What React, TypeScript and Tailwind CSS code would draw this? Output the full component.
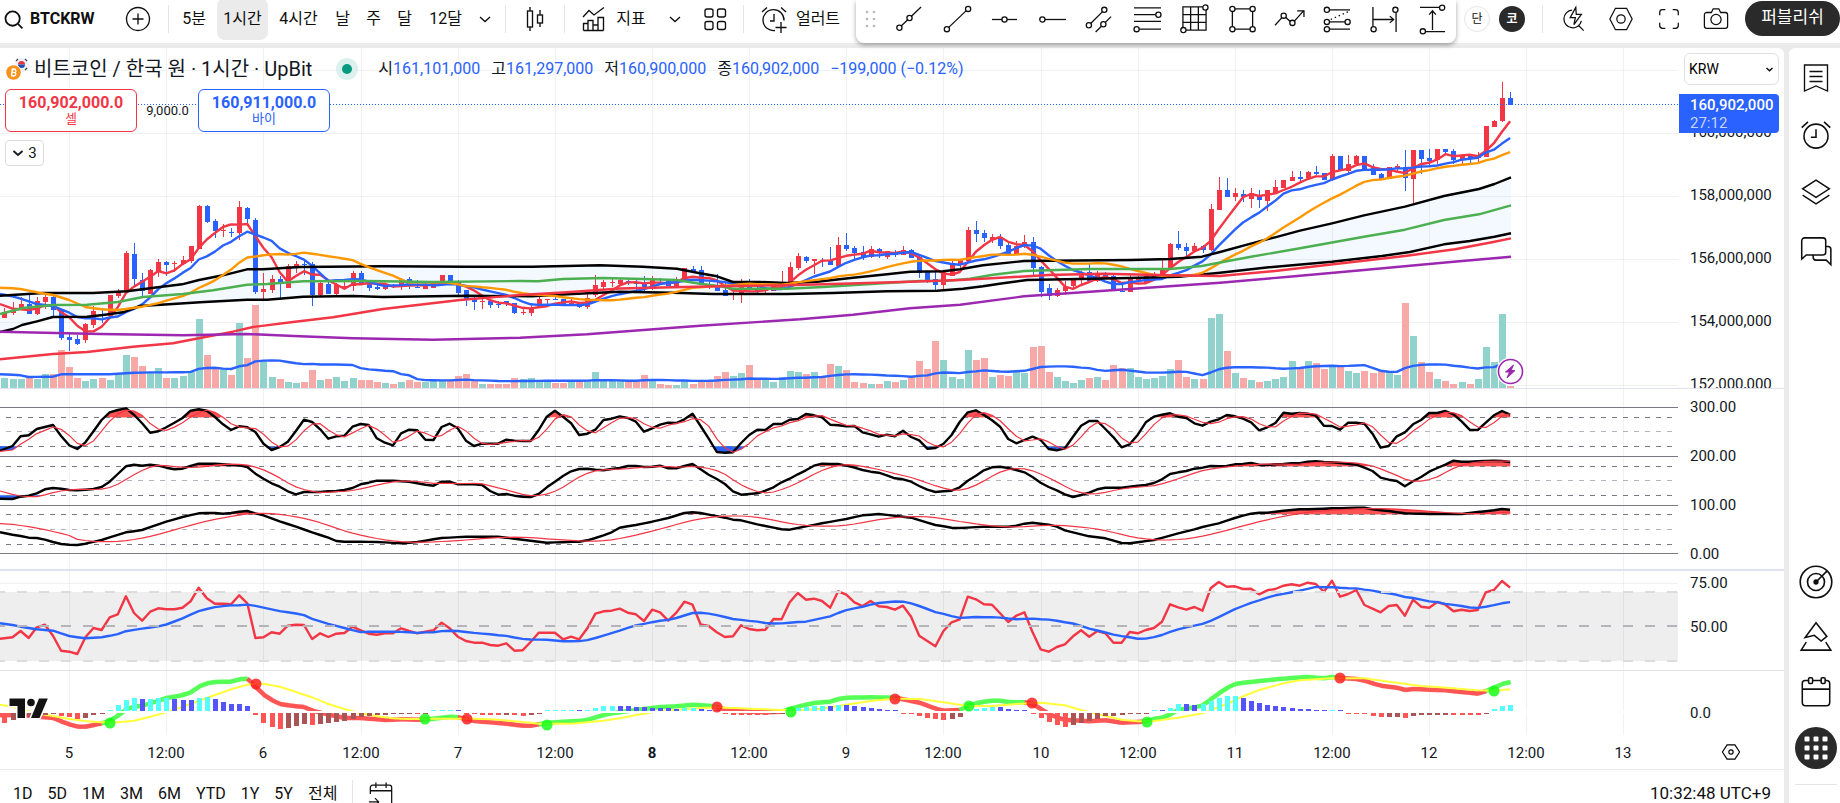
import React from "react";

/* ------------------------------------------------------------------ */
/* Series data. Vertical values are in thirds of a pixel from pane top */
/* ------------------------------------------------------------------ */

const BARS = 187;
const barX = (i: number) => 4.45 + 8.095 * i;
const snapX = (i: number) => Math.round(barX(i));

// direction (R = up, B = down), body top, body bottom, wick top, wick bottom, volume top
const CANDLES = `R396,413,383,413,594 R391,398,365,404,597 R372,389,352,389,597 B373,402,341,402,591 R363,402,350,405,597 R351,366,338,388,582 B351,390,345,414,582 B387,474,387,480,510
B471,480,456,513,561 B477,492,464,495,594 R432,480,429,489,603 R393,435,378,445,597 B402,405,385,428,594 R345,408,345,410,600 R333,348,328,354,585 R219,337,213,337,525
B222,297,189,322,531 B300,333,279,348,558 R270,342,267,342,580 R246,276,237,291,564 B246,255,243,288,594 R250,253,243,276,594 R240,252,228,255,588 R198,243,198,249,576
R78,207,75,207,417 B78,126,75,129,525 B123,153,117,174,564 R150,153,132,171,567 B156,159,144,171,585 R81,159,63,180,429 B84,117,81,138,534 B120,336,114,342,375
R327,336,279,360,543 R297,330,285,339,591 B297,306,288,360,597 R258,324,252,324,606 R252,264,243,279,609 B252,255,240,285,606 B252,346,246,378,570 R309,346,303,351,600
B312,342,303,342,597 R315,342,309,346,591 R318,321,306,327,603 R279,318,273,333,594 B279,309,273,309,600 B306,324,306,333,600 B321,327,312,330,606 R318,327,318,330,609
B318,321,312,324,612 R300,321,294,330,606 B297,318,291,327,600 B321,324,300,324,606 R315,327,303,327,606 R309,324,309,324,600 R285,315,285,318,603 B285,306,285,306,603
B303,339,300,345,588 B330,360,330,378,582 B354,366,348,390,603 R363,366,348,387,612 B363,375,360,384,612 B372,375,363,384,612 B363,372,363,378,612 B369,399,369,402,594
R396,399,384,405,597 R384,399,372,408,594 R357,384,351,384,600 R357,360,357,375,603 B357,360,351,360,609 B357,378,357,378,609 R369,378,354,378,603 B369,381,369,384,603
R354,381,336,387,600 R315,345,285,351,576 R306,321,300,327,600 R306,309,294,321,600 R300,312,297,312,600 B303,309,294,315,603 B306,312,300,333,603 B309,324,288,333,585
R294,324,288,330,600 B297,300,294,306,612 B300,318,297,318,615 R297,321,291,321,615 R264,306,264,306,603 B267,273,258,276,612 B270,315,258,315,600 B312,321,300,327,600
B318,333,282,333,588 B330,348,303,348,576 R342,345,330,360,588 R318,345,297,369,579 B318,330,297,336,555 B330,333,303,342,594 R330,333,321,342,597 R306,333,306,333,606
R309,321,273,324,591 R261,321,246,321,573 R228,264,219,270,576 B231,243,228,249,582 R237,243,237,282,576 B240,243,234,261,591 B240,255,201,255,552 R195,258,171,261,558
B195,207,159,213,570 B204,219,198,237,606 B216,231,198,240,609 R207,231,198,234,612 B207,219,204,234,612 R213,231,213,237,603 B219,225,210,231,606 R210,225,198,225,600
B210,234,207,234,591 B231,279,228,294,543 B276,300,276,309,567 B297,315,273,330,483 R273,315,270,330,540 R252,288,243,288,591 R240,255,237,270,597 R150,243,141,243,510
B150,162,123,186,540 B159,174,150,186,534 R171,180,162,189,591 B171,198,162,207,585 B195,222,186,222,588 R198,222,183,222,576 R186,202,165,204,579 B186,264,171,288,501
B261,336,258,351,498 B324,348,312,360,576 R330,348,324,351,591 R321,333,303,345,603 R297,318,294,324,609 R279,300,273,312,600 B276,303,249,303,594 R279,303,273,306,591
B279,294,276,297,600 B288,333,285,333,555 B333,336,312,336,564 R294,336,282,336,564 R297,300,288,309,591 R288,309,282,312,597 R282,294,276,300,594 R264,291,237,291,588
R192,267,189,270,567 B192,204,153,210,540 B201,213,189,228,591 R198,213,189,216,597 B198,210,195,219,597 R87,210,72,213,414 R30,90,-9,90,402 B30,51,-6,51,513
R39,51,24,63,579 B42,51,30,66,594 R39,57,24,84,600 B45,60,30,84,606 R30,63,30,93,603 R21,39,0,42,597 R0,24,0,24,591 R-9,3,-27,3,543
B-9,-3,-27,6,564 R-24,-6,-27,-3,543 B-24,-18,-42,-15,549 B-21,0,-21,0,567 R-72,0,-78,3,558 B-72,-30,-72,-30,561 R-48,-27,-75,-21,573 R-72,-48,-75,-42,579
B-72,-27,-72,-27,573 B-36,-15,-48,-15,579 B-18,-3,-21,0,570 R-39,-3,-39,-3,576 R-42,-36,-48,-24,585 B-39,-6,-90,33,369 R-90,-3,-90,69,468 B-90,-63,-90,-18,546
B-66,-57,-93,-42,576 R-93,-60,-93,-48,597 B-93,-84,-93,-78,603 B-87,-60,-93,-48,612 R-75,-60,-78,-48,606 B-72,-66,-75,-48,612 R-72,-66,-84,-48,597 R-162,-69,-162,-69,501
R-177,-159,-180,-159,546 R-246,-177,-294,-174,402 B-246,-225,-264,-225,618`
  .split(/\s+/)
  .map((t) => {
    const [top, bottom, high, low, vol] = t.slice(1).split(",").map(Number);
    const up = t[0] === "R";
    return { up, top, bottom, high, low, vol, close: up ? top : bottom };
  });

// Expands "index,value" pairs to one value per bar.
const expand = (text: string) => {
  const pts = text.trim().split(/\s+/).map((p) => p.split(",").map(Number));
  const out: number[] = [];
  for (let i = 0; i < BARS; i++) {
    let k = pts.findIndex((p) => p[0] >= i);
    if (k < 0) k = pts.length - 1;
    const b = pts[k];
    const a = pts[Math.max(0, k - 1)];
    out.push(b[0] === a[0] ? b[1] : a[1] + ((b[1] - a[1]) * (i - a[0])) / (b[0] - a[0]));
  }
  return out;
};

const list = (text: string) => text.trim().split(/[\s,]+/).map(Number);

// Simple moving average, with the values before the first full window given.
const average = (values: number[], n: number, lead: string) => {
  const head = expand(lead);
  return values.map((_, i) =>
    i < n - 1 ? head[i] : values.slice(i - n + 1, i + 1).reduce((a, b) => a + b, 0) / n
  );
};

const trace = (values: number[], base: number) =>
  values.map((v, i) => `${i === 0 ? 0 : barX(i).toFixed(1)},${(base + v / 3).toFixed(1)}`).join(" ");

const closes = CANDLES.map((c) => c.close);
const MA5 = average(closes, 5, "0,372 1,386 3,390 4,388");
const MA10 = average(closes, 10, "0,342 2,356 4,372 6,378 8,398 9,407");
const MA20 = average(closes, 20, "0,323 2,327 4,337 6,345 8,360 10,381 12,388 14,390 15,387 17,380 19,369");
const VOL20 = average(CANDLES.map((c) => c.vol), 20, "0,583 2,586 3,591 6,590 7,583 13,583 16,578 19,577");

const UPPER =
  "0,295.7 43,293 93,293 127,291.3 150,288.3 182,284.3 199,280 223,275.3 247,269.3 263,269.3 300,267 383,266.3 467,266.7 532,266.7 600,265.3 643,266.7 677,268.7 700,273.3 717,276.3 733,282 760,282 787,283 817,281.7 853,277.7 887,274.3 910,271.7 943,271.3 960,269.3 983,265.3 1024,261 1131,260 1170,259 1202,256.7 1220,252 1248,244.3 1275,237.3 1300,230.7 1332,223.3 1364,215.3 1405,206.7 1444,196 1479,189 1494.5,184 1511,177.3";
const LOWER =
  "0,332 13,329 22,325 37,321.3 53,317 87,316.7 103,315 123,312.3 140,306 173,304 200,302.3 247,299.7 267,299.7 303,296.7 353,296 383,297 467,295.7 532,296.3 567,294.3 620,291.7 673,292.7 713,294 787,294 833,293 887,291.3 937,290.7 963,288.7 983,286.3 1003,283.3 1027,280 1131,278 1179,276.7 1220,272.7 1269,267.3 1332,261.7 1382,256 1410,252 1444,244.3 1470,241 1494.5,236.7 1511,233.3";
const MIDDLE =
  "0,314 23,308 53,305 87,304.7 118,302 143,297 183,294 213,290.3 247,284.7 267,284 303,281.3 367,281 433,282 520,281 538,281.3 563,279 603,278 643,279 677,280 700,283.7 720,286.3 733,288.7 787,288.7 823,287 887,283 920,281 947,280.7 970,278.7 993,274.7 1024,271 1090,269 1170,269 1202,266 1224,261.7 1251,256.7 1300,248.3 1364,236.7 1405,229.7 1444,220 1479,214.3 1511,205.3";
const SLOW =
  "0,359.3 53,354 87,352 133,346.7 173,343.3 200,338 233,331.7 253,327 293,322 333,317.3 383,309 460,300 520,295 567,292.3 620,288.5 673,287.3 733,286 787,285.3 833,284 910,281.7 960,280 1020,276.7 1048,275 1103,273.7 1170,275.3 1220,276 1275,271 1344,263 1405,256 1455,249.3 1492,242.3 1511,238.3";
const SLOWEST =
  "0,331.7 100,334 183,335.3 247,334 300,336.3 353,338.3 433,339.7 520,337.7 587,334.3 700,325.7 800,319.3 853,314.7 910,308.3 960,304.7 1024,296.3 1090,291.7 1220,282.7 1289,276.7 1364,270 1448,262.3 1511,256.7";

const K1 = list(`182,168,139,136,117,111,105,138,166,177,157,124,90,67,60,55,74,100,128,124,112,98,84,62,58,62,81,103,120,109,112,126,161,180,171,155,123,89,96,118,146,139,137,110,102,105,145,158,166,130,119,121,149,150,111,101,115,152,168,161,161,161,149,152,153,153,120,80,62,80,100,135,131,119,90,86,79,
84,95,125,115,104,98,99,88,71,108,146,186,188,187,159,135,119,120,102,102,89,87,72,76,82,104,106,109,108,127,133,140,134,139,122,141,151,176,174,161,135,96,67,61,75,91,110,147,160,150,140,150,177,181,175,140,107,93,93,117,142,172,163,134,97,80,74,70,80,84,100,107,95,88,
75,79,86,97,121,112,99,68,71,69,71,77,107,108,119,98,98,101,131,173,168,139,127,103,90,69,69,63,73,94,119,120,98,76,63,74`);
const D1 = average(K1, 3, "0,184 1,180 2,165");

const K2 = list(`326,327,320,317,310,298,294,296,300,301,299,297,291,275,252,229,224,227,224,227,233,238,236,228,221,221,221,223,225,226,231,251,266,280,290,304,313,306,306,306,304,303,300,294,283,278,272,272,272,274,275,280,284,287,275,275,283,283,283,285,303,314,312,317,320,321,312,292,275,258,244,237,236,239,241,237,234,
228,228,231,230,227,235,235,228,222,238,254,267,282,304,314,312,310,302,292,277,266,253,241,227,221,222,222,227,233,240,245,248,256,265,268,275,288,299,306,304,302,292,272,257,241,232,230,234,240,247,261,278,291,301,313,321,315,308,298,293,293,293,290,287,285,279,268,252,247,243,236,233,228,229,
228,223,222,219,224,225,223,222,220,220,215,214,216,217,219,221,224,233,243,263,269,273,289,274,261,245,234,224,212,215,215,214,213,212,213,216`);
const D2 = average(K2, 5, "0,303 1,313 2,318 3,320");

const K3 = expand(`0,427 1,434 2,438 3,443 4,444 5,449 6,456 7,462 8,464 9,465 10,461 12,450 15,427 17,420 20,395 22,381 24,370 25,369 26,369 27,371 28,369 29,365 30,363 31,370 32,376 34,394 36,410 38,427 40,443 41,453 42,455 46,456 49,460 51,456 54,444 57,440 61,440 64,449 67,458 71,455 72,451 73,444 74,436 75,427 76,413 78,405 80,395 82,384 84,369 85,367 86,369 89,383 90,389 91,391 93,403 96,418 97,419 98,414 101,400 104,387 106,376 108,372 112,383 115,405 117,413 118,414 121,410 124,410 125,407 126,401 127,398 129,404 130,410 131,421 134,439 136,445 138,459 139,460 142,450 145,430 147,418 148,411 150,400 151,392 152,384 153,377 154,371 155,368 156,368 158,362 160,358 162,357 164,355 168,353 169,358 171,363 173,370 176,372 180,372 182,366 184,361 185,357 186,359`);
const D3 = average(K3, 10, "0,401 1,403 3,410 5,419 7,430 9,443");

const RSI = list(`236,232,213,234,202,194,227,272,275,282,232,204,210,172,163,109,159,182,155,145,148,148,143,124,83,115,131,131,133,106,130,234,232,217,221,197,194,195,237,220,231,221,219,200,211,221,224,220,220,205,213,220,215,211,188,205,230,243,248,248,255,257,250,272,271,246,218,218,218,238,230,238,205,161,154,152,146,
158,163,183,149,157,182,158,125,134,193,198,217,231,229,196,207,211,209,177,178,127,99,119,116,123,143,94,104,127,138,123,139,141,149,137,170,227,243,259,213,187,178,110,118,133,134,160,186,167,157,216,268,275,261,253,229,211,230,213,220,248,248,216,220,210,204,185,133,142,149,141,152,85,66,
80,79,87,86,103,91,87,77,73,77,68,72,95,62,110,102,90,135,146,157,138,135,167,119,140,143,126,134,154,149,153,150,97,90,63,83`);
const RSI_MA = average(RSI, 14, "0,190 2,200 4,208 6,212 8,228 10,235 12,232");

const MACD = expand(`0,466 2,464 4,470 5,472 6,474 7,484 8,493 9,500 10,500 11,495 12,490 13,482 14,467 15,448 16,440 17,437 18,430 19,422 20,414 21,410 22,405 23,397 24,380 25,370 26,366 28,365 29,358 30,356 31,380 32,404 33,420 34,432 35,436 37,441 38,452 40,464 42,474 44,474 47,480 49,478 51,479 53,476 55,470 56,472 57,477 58,483 60,487 62,491 64,497 65,497 67,489 69,485 71,483 72,480 73,472 74,465 75,460 76,457 77,453 79,447 81,441 83,439 85,434 87,437 88,441 89,448 90,453 94,457 96,455 97,447 98,440 99,434 100,429 102,425 103,417 104,413 107,412 110,413 111,418 113,428 114,437 115,446 116,452 118,450 119,437 120,430 121,425 122,422 123,422 124,426 126,427 127,432 128,447 129,462 130,472 131,480 133,482 134,484 136,481 138,488 140,486 141,484 142,476 143,473 144,463 145,449 147,442 148,436 149,418 150,400 151,384 152,372 153,368 156,361 157,358 159,354 161,351 163,355 164,351 165,354 167,357 168,362 169,370 170,377 172,383 173,390 174,387 178,391 182,401 183,393 184,383 185,372 186,366`);
const SIGNAL = expand(`0,434 1,440 4,460 6,468 8,477 10,483 12,487 14,487 16,482 18,470 20,457 22,440 24,423 26,405 28,388 30,374 31,371 32,371 34,380 36,396 38,412 40,432 42,447 44,460 46,469 48,475 50,477 54,476 58,476 61,479 64,486 66,491 70,491 74,482 76,475 78,465 80,457 82,451 86,444 88,442 92,446 96,450 98,451 101,446 104,434 107,423 110,416 113,417 116,427 119,438 122,438 125,432 128,428 131,436 133,450 136,468 138,479 140,484 142,483 145,473 148,460 150,441 151,432 153,409 155,390 158,370 160,361 164,355 168,355 171,365 175,378 178,383 182,391 184,392 186,388`);

const CROSSES: [number, number, boolean][] = [
  [110, 723, true], [256, 684, false], [425, 719, true], [467, 719, false], [547, 725, true],
  [717, 707, false], [791, 712, true], [895, 699, false], [969, 706, true], [1032, 703, false],
  [1147, 722, true], [1340, 678, false], [1494, 691, true],
];

const TIMES = ["5", "12:00", "6", "12:00", "7", "12:00", "8", "12:00", "9", "12:00", "10", "12:00", "11", "12:00", "12", "12:00", "13"];
const timeX = (k: number) => snapX(8 + 12 * k);

/* ------------------------------------------------------------------ */
/* Chart panes                                                         */
/* ------------------------------------------------------------------ */

const INK = "#131722";
const UP = "#f23645";
const DOWN = "#2962ff";
const GRID = "#f0f1f2";

function Line({ points, color, width = 2.4 }: { points: string; color: string; width?: number }) {
  return <polyline points={points} fill="none" stroke={color} strokeWidth={width} strokeLinejoin="round" />;
}

function VerticalGrid({ top, height }: { top: number; height: number }) {
  return (
    <>
      {TIMES.map((_, k) => (
        <rect key={k} x={timeX(k)} y={top} width="1" height={height} fill="#000" opacity="0.055" />
      ))}
    </>
  );
}

function Pane({
  top, height, line, labels, children, overlay, axis,
}: {
  top: number; height: string; line: string; labels: [string, number][];
  children: React.ReactNode; overlay?: React.ReactNode; axis?: React.ReactNode;
}) {
  return (
    <section className={`relative flex shrink-0 ${height} ${line}`}>
      <svg className="h-full min-w-0 flex-1 overflow-hidden" aria-hidden="true">
        <g transform={`translate(0,${-top})`}>{children}</g>
      </svg>
      <div className="relative h-full w-[106px] shrink-0">
        <svg className="h-full w-full overflow-hidden text-[15px]">
          <g transform={`translate(0,${-top})`} fill={INK}>
            {labels.map(([text, y]) => (
              <text key={text} x="12" y={y + 5}>{text}</text>
            ))}
          </g>
        </svg>
        {axis}
      </div>
      {overlay}
    </section>
  );
}

function PricePane() {
  const band = `${UPPER} ${LOWER.split(" ").reverse().join(" ")}`;
  return (
    <Pane
      top={48}
      height="h-[341px]"
      line="border-b border-[#e0e3eb]"
      labels={[["160,000,000", 132], ["158,000,000", 195], ["156,000,000", 258], ["154,000,000", 321], ["152,000,000", 384]]}
      overlay={<Legend />}
      axis={<PriceAxis />}
    >
      {[70, 133, 196, 259, 322, 385].map((y) => (
        <rect key={y} x="0" y={y} width="100%" height="1" fill={GRID} />
      ))}
      <VerticalGrid top={48} height={340} />
      {CANDLES.map((c, i) => (
        <rect key={i} x={snapX(i) - 3} y={180 + Math.round(c.vol / 3)} width="7" height={208 - Math.round(c.vol / 3)} fill={c.up ? "#92d2cc" : "#f7a9a7"} />
      ))}
      <Line points={trace(VOL20, 180)} color={DOWN} />
      <polygon points={band} fill="#2196f3" opacity="0.055" />
      {CANDLES.map((c, i) => {
        const x = snapX(i);
        const y = 180 + Math.round(c.top / 3);
        const h = Math.max(1, Math.round(c.bottom / 3) - Math.round(c.top / 3));
        const w = 180 + Math.round(c.high / 3);
        return (
          <g key={i} fill={c.up ? UP : DOWN}>
            <rect x={x} y={w} width="1" height={Math.round(c.low / 3) - Math.round(c.high / 3)} />
            <rect x={x - 2} y={y} width="5" height={h} />
          </g>
        );
      })}
      <Line points={trace(MA5, 180)} color={UP} />
      <Line points={trace(MA10, 180)} color={DOWN} />
      <Line points={UPPER} color="#000" />
      <Line points={LOWER} color="#000" />
      <Line points={trace(MA20, 180)} color="#ff9800" />
      <Line points={MIDDLE} color="#4caf50" />
      <Line points={SLOW} color={UP} />
      <Line points={SLOWEST} color="#9c27b0" />
      <line x1="0" x2="100%" y1="104.5" y2="104.5" stroke={DOWN} strokeDasharray="1 2" />
      <circle cx="1510.5" cy="371.5" r="14" fill="#fff" />
      <circle cx="1510.5" cy="371.5" r="12" fill="#fff" stroke="#9c27b0" strokeWidth="1.6" />
      <path d="M1513.5 365 l-8 7 h4 l-2.500 6 8-7.500 h-4z" fill="#9c27b0" stroke="#9c27b0" strokeLinejoin="round" />
    </Pane>
  );
}

function OscillatorPane() {
  const zones = [
    { k: K1, d: D1, top: 52, hi: 82, mid: 124, lo: 169, end: 199 },
    { k: K2, d: D2, top: 199, hi: 229, mid: 271, lo: 316, end: 346 },
    { k: K3, d: D3, top: 346, hi: 373, mid: 418, lo: 463, end: 490 },
  ];
  const y = (v: number) => 390 + Math.floor(v / 3);
  return (
    <Pane top={389} height="h-[182px]" line="border-b-2 border-[#e0e3eb]" labels={[["300.00", 407], ["200.00", 456], ["100.00", 505], ["0.00", 554]]}>
      <VerticalGrid top={389} height={180} />
      {[52, 199, 346, 490].map((v) => (
        <rect key={v} x="0" y={y(v)} width="100%" height="1" fill="#787b86" />
      ))}
      {zones.map((z, n) => {
        const hi = 390 + z.hi / 3;
        const lo = 390 + z.lo / 3;
        return (
          <g key={n}>
            <clipPath id={`over${n}`}><rect x="0" y={y(z.top)} width="1511" height={hi - y(z.top)} /></clipPath>
            <clipPath id={`under${n}`}><rect x="0" y={lo} width="1511" height={y(z.end) - lo} /></clipPath>
            {[z.k, z.d].map((s, m) => (
              <g key={m}>
                <polygon clipPath={`url(#over${n})`} points={`0,${lo} ${trace(s, 390)} 1511,${lo}`} fill="#ff5252" />
                <polygon clipPath={`url(#under${n})`} points={`0,${hi} ${trace(s, 390)} 1511,${hi}`} fill={DOWN} />
              </g>
            ))}
            {[z.hi, z.mid, z.lo].map((v) => (
              <line key={v} x1="0" x2="100%" y1={y(v) + 0.5} y2={y(v) + 0.5} stroke={v === z.mid ? "#b2b5be" : "#787b86"} strokeDasharray="5 6" strokeDashoffset="5" />
            ))}
            <Line points={trace(z.k, 390)} color="#000" />
            <Line points={trace(z.d, 390)} color={UP} width={1.2} />
          </g>
        );
      })}
    </Pane>
  );
}

function RsiPane() {
  return (
    <Pane top={571} height="h-[100px]" line="border-b border-[#e0e3eb]" labels={[["75.00", 583], ["50.00", 627]]}>
      <rect x="0" y="583" width="100%" height="1" fill={GRID} />
      <rect x="0" y="592" width="100%" height="69" fill="#eeeeee" />
      <VerticalGrid top={571} height={99} />
      <Line points={trace(RSI, 560)} color={UP} />
      <Line points={trace(RSI_MA, 560)} color={DOWN} />
      {[[592, "#dcdcdc"], [626, "#b4b4ba"], [661, "#dcdcdc"]].map(([y, c]) => (
        <line key={y} x1="0" x2="100%" y1={y} y2={y} stroke={c as string} strokeWidth="2" strokeDasharray="10 12" strokeDashoffset="5" />
      ))}
    </Pane>
  );
}

function MacdPane() {
  const hist = MACD.map((v, i) => SIGNAL[i] - v);
  return (
    <Pane top={671} height="h-16" line="" labels={[["0.0", 713]]}>
      <VerticalGrid top={671} height={64} />
      {MACD.slice(1).map((v, k) => (
        <line
          key={k}
          x1={k === 0 ? 0 : barX(k)}
          y1={560 + MACD[k] / 3}
          x2={barX(k + 1) + 0.5}
          y2={560 + v / 3}
          stroke={hist[k + 1] >= 0 ? "#55ff55" : "#ff5555"}
          strokeWidth="4.500"
        />
      ))}
      <Line points={trace(SIGNAL, 560)} color="#ffff3c" width={2} />
      {hist.map((h, i) => {
        const rising = i > 0 && h > hist[i - 1];
        const size = Math.max(1, Math.round(Math.abs(h) / 3) - 1);
        const color = h >= 0 ? (rising ? "#55ffff" : "#5555ff") : rising ? "#aa5555" : "#ff5555";
        return <rect key={i} x={snapX(i) - 2} y={h >= 0 ? 711 - size : 713} width="5" height={size} fill={color} />;
      })}
      <rect x="0" y="711" width="1640" height="2" fill="#fff" />
      {CROSSES.map(([x, y, up]) => (
        <circle key={x} cx={x} cy={y} r="5.5" fill={up ? "#19ff19" : "#ff2222"} opacity="0.85" />
      ))}
      <g fill="#131313" stroke="#fff" strokeWidth="3" paintOrder="stroke">
        <path d="M9.500 698.500H25V718H17.500V706H9.500z" />
        <circle cx="31" cy="702.500" r="3.800" />
        <path d="M39 698.500H47.800L39.500 718H31z" />
      </g>
    </Pane>
  );
}

function TimeAxis() {
  return (
    <div className="flex h-[35px] shrink-0 items-center border-b border-[#ebebeb]">
      <svg className="h-full min-w-0 flex-1 overflow-hidden text-[15px]">
        {TIMES.map((t, k) => (
          <text key={k} x={timeX(k)} y="23" textAnchor="middle" fill={INK} className={k === 6 ? "font-bold" : ""}>{t}</text>
        ))}
      </svg>
      <div className="flex w-[106px] shrink-0 justify-center">
        <button aria-label="축 설정"><Icon name="hexSmall" size={20} /></button>
      </div>
    </div>
  );
}

/* ------------------------------------------------------------------ */
/* Chart overlays                                                      */
/* ------------------------------------------------------------------ */

function Quote({ label, value }: { label: string; value: string }) {
  return (
    <span className="whitespace-nowrap">
      {label}
      <span className="text-[#2962ff]">{value}</span>
    </span>
  );
}

function Legend() {
  return (
    <div className="absolute top-[9px] left-[5px] flex flex-col items-start text-[#131722]">
      <div className="flex h-6 items-center">
        <svg width="24" height="24" viewBox="0 0 24 24" aria-hidden="true">
          <circle cx="16.500" cy="8" r="7.500" fill="#f0f1f5" />
          <path d="M13 7.500a3.500 3.500 0 0 1 7 0z" fill="#e8323f" />
          <path d="M13 7.500a3.500 3.500 0 0 0 7 0z" fill="#1d4fb4" />
          <path d="M11 4l2-2M20 2l2 2M20 13l2-2" stroke="#444" strokeWidth="1.200" />
          <circle cx="8.500" cy="15.500" r="8" fill="#fff" />
          <circle cx="8.500" cy="15.500" r="7.300" fill="#f7931a" />
          <g transform="rotate(12 8.5 15.5)">
            <path d="M6.500 12.500h2.700a1.400 1.400 0 0 1 0 2.900H7zM7 15.400h2.600a1.550 1.550 0 0 1 0 3.100H6.500M7 12.500v6M7.600 11.200v1.300M9.300 11.200v1.300M7.600 18.500v1.300M9.300 18.500v1.300" fill="none" stroke="#fff" strokeWidth="1.300" />
          </g>
        </svg>
        <h1 className="ml-[5px] text-[20px] whitespace-nowrap">비트코인 / 한국 원 · 1시간 · UpBit</h1>
        <span className="ml-6 flex size-[22px] items-center justify-center rounded-full bg-[#dcf1ed]">
          <span className="size-[10px] rounded-full bg-[#089981]" />
        </span>
        <div className="ml-5 flex gap-[11px] text-[16px]">
          <Quote label="시" value="161,101,000" />
          <Quote label="고" value="161,297,000" />
          <Quote label="저" value="160,900,000" />
          <Quote label="종" value="160,902,000" />
          <span className="whitespace-nowrap text-[#2962ff]">−199,000 (−0.12%)</span>
        </div>
      </div>
      <div className="mt-2 flex items-center">
        <button className="flex h-[43px] w-[132px] flex-col items-center justify-center rounded-md border border-[#f23645] bg-white text-[#f23645]">
          <span className="text-[16px] leading-[17px] font-bold">160,902,000.0</span>
          <span className="text-[13px] leading-4">셀</span>
        </button>
        <span className="w-[61px] text-center text-[13px]">9,000.0</span>
        <button className="flex h-[43px] w-[132px] flex-col items-center justify-center rounded-md border border-[#2962ff] bg-white text-[#2962ff]">
          <span className="text-[16px] leading-[17px] font-bold">160,911,000.0</span>
          <span className="text-[13px] leading-4">바이</span>
        </button>
      </div>
      <button className="mt-2 flex h-[26px] w-[39px] items-center justify-center gap-1 rounded border border-[#dcdcdc] bg-white text-[15px]">
        <svg width="12" height="12" viewBox="0 0 12 12" fill="none" stroke="currentColor" strokeWidth="1.800"><path d="M1.500 4l4.500 4 4.500-4" /></svg>
        3
      </button>
    </div>
  );
}

function PriceAxis() {
  return (
    <div className="absolute top-[5px] left-px flex w-full flex-col items-start">
      <div className="relative ml-[5px]">
        <select aria-label="통화" className="h-8 w-[95px] appearance-none rounded-md border border-[#e0e0e0] bg-white pl-1 text-[14px] text-black">
          <option>KRW</option>
        </select>
        <svg className="pointer-events-none absolute top-[12px] right-[5px]" width="9" height="9" viewBox="0 0 9 9" fill="none" stroke="#111" strokeWidth="1.500"><path d="M1.500 3l3 2.800 3-2.800" /></svg>
      </div>
      <div className="mt-[9px] flex h-[39px] w-[100px] flex-col justify-center rounded-r-sm bg-[#2962ff] pl-[11px] text-[15px] leading-[18px] text-white">
        <span className="font-medium">160,902,000</span>
        <span className="text-[#c5d4ff]">27:12</span>
      </div>
    </div>
  );
}

/* ------------------------------------------------------------------ */
/* Icons                                                               */
/* ------------------------------------------------------------------ */

const dot = (cx: number, cy: number, r = 2.7) => <circle key={`${cx}-${cy}`} cx={cx} cy={cy} r={r} fill="#fff" />;

const ICONS: Record<string, React.ReactNode> = {
  search: <g strokeWidth="2"><circle cx="13" cy="13" r="8" /><path d="M19 19l5 5" /></g>,
  plus: <><circle cx="14" cy="14" r="11.500" /><path d="M14 8.500v11M8.500 14h11" /></>,
  chevron: <path d="M9 12l5 4.500 5-4.500" />,
  candles: <><path d="M9 2v4M9 22v4M19 5v5M19 18v4" /><rect x="6.500" y="6" width="5" height="16" /><rect x="16.500" y="10" width="5" height="8" /></>,
  indicators: <path d="M3 12l6-6.500 5 4.500 10-7.500M3.500 25.500v-7h4.500v7M8 25.500v-10h5v10M13 20h5M13 25.500h5M18 25.500v-13h5.500v13M3.500 25.500h20" />,
  layout: <><rect x="4" y="4" width="8" height="8" rx="2" /><rect x="16.500" y="4" width="8" height="8" rx="2" /><rect x="4" y="16.500" width="8" height="8" rx="2" /><rect x="16.500" y="16.500" width="8" height="8" rx="2" /></>,
  alertPlus: <><path d="M24 15.500a10.500 10.500 0 1 0-9 10M14 9v7h-4M21 17v11M15.500 22.500h11M2 7l5-4.500M26 7l-5-4.500" /></>,
  alarm: <><circle cx="14" cy="15" r="10.500" /><path d="M14 9v7h-4.500M1.500 7.500l5.500-5M26.500 7.500l-5.500-5" /></>,
  trend: <><path d="M3.500 22.500L26 1" />{dot(3.5, 22.5)}{dot(14, 12.5)}</>,
  segment: <><path d="M3 24L25 3" />{dot(3, 24)}{dot(25, 3)}</>,
  hline: <><path d="M1 14h26" />{dot(14, 14)}</>,
  ray: <><path d="M4 14h24" />{dot(3.5, 14)}</>,
  channel: <><path d="M3 20L19 4M10 27L26 11" />{dot(3, 20)}{dot(19, 4)}{dot(18, 19)}</>,
  fib: <><path d="M0 2h28M0 9h26M0 16h28M2 24h26" />{dot(25.3, 9)}{dot(2.7, 24)}</>,
  gridTool: <><path d="M2 1h24v24H2zM10 1v24M18 1v24M2 9h24M2 17h24" />{dot(25.3, 1.5)}{dot(2.5, 25)}</>,
  rect: <><path d="M3.500 3h21v21h-21z" />{dot(3.5, 3)}{dot(24.5, 3)}{dot(3.5, 24)}{dot(24.5, 24)}</>,
  zigzag: <><path d="M-1 20l9-10 9 8L29 4.500M22 5h7v6.500" />{dot(8, 10)}{dot(17, 17.5)}</>,
  forecast: <><path d="M3 4h24M3 16.500h20M3 24h24" /><path d="M7 14l20-9" strokeDasharray="1.500 3" />{dot(3, 4)}{dot(3, 16.5)}{dot(24.5, 16.5)}{dot(3, 24)}</>,
  dateRange: <><path d="M2 1v23M26 4v23M2 14h21M19.500 10.500l4 3.500-4 3.500" />{dot(2.7, 24)}{dot(25.3, 4)}</>,
  priceRange: <><path d="M1 1.500h22M5 26.500h22M14 25V6M10.500 9L14 5l3.500 4" />{dot(24, 1.7)}{dot(4, 26.3)}</>,
  flash: <><path d="M13 4.500A9.500 9.500 0 1 0 23 16M19.500 20.500l6 6M17 1.500l-6 11h5.500L15 20l8-11h-5.500z" /></>,
  hex: <><path d="M8 2.500h12l6 11.500-6 11.500H8L2 14z" /><circle cx="14" cy="14" r="4.500" /></>,
  hexSmall: <g strokeWidth="1.600"><path d="M8.500 4h11L26 14l-6.500 10h-11L2 14z" /><circle cx="14" cy="14" r="3" /></g>,
  fullscreen: <path d="M4 10V7a3 3 0 0 1 3-3h3M18 4h3a3 3 0 0 1 3 3v3M24 18v3a3 3 0 0 1-3 3h-3M10 24H7a3 3 0 0 1-3-3v-3" />,
  camera: <><path d="M4 7h5l2-4h6l2 4h5a2.500 2.500 0 0 1 2.500 2.500v12A2.500 2.500 0 0 1 24 24H4a2.500 2.500 0 0 1-2.500-2.500v-12A2.500 2.500 0 0 1 4 7z" /><circle cx="14" cy="14.500" r="5.500" /></>,
  watchlist: <path d="M2.500 1h23v26L14 22 2.500 27zM7.500 7.500h13M7.500 12.500h13M7.500 17.500h13" />,
  layers: <path d="M14 3L26.500 11 14 19 1.500 11zM1.500 17L14 25l12.500-8" />,
  chat: <path d="M4 2.500h16a2.500 2.500 0 0 1 2.500 2.500v10a2.500 2.500 0 0 1-2.500 2.500H5.500L1.500 21V5A2.500 2.500 0 0 1 4 2.500zM22.500 10h2a2.500 2.500 0 0 1 2.500 2.500V26l-4-4h-9a2.500 2.500 0 0 1-2.500-2.500v-2" />,
  target: <><circle cx="14" cy="14" r="13" /><circle cx="14" cy="14" r="7" /><circle cx="14" cy="14" r="1.500" fill="currentColor" /><path d="M14 14l9-9" /></>,
  ideas: <path d="M14 1.500l9.500 12-5 4-6-5-8 2zM5.500 18.500L1 25.500h26l-4.500-7" />,
  calendar: <><path d="M8 4H4.500A2.500 2.500 0 0 0 2 6.500v17A2.500 2.500 0 0 0 4.500 26h19a2.500 2.500 0 0 0 2.500-2.500v-17A2.500 2.500 0 0 0 23.500 4H22M11 4h8M2 11.500h24" /><rect x="7.500" y="1.500" width="3.500" height="5" rx="1" /><rect x="18.500" y="1.500" width="3.500" height="5" rx="1" /></>,
  goTo: <path d="M2.500 14V7A2.500 2.500 0 0 1 5 4.500h18A2.500 2.500 0 0 1 25.500 7v16a2.500 2.500 0 0 1-2.500 2.500h-7M2.500 10.500h23M8.500 1.500v6M19.500 1.500v6M1 22.500h10M7.500 18.500l4 4-4 4" />,
};

function Icon({ name, size = 28 }: { name: string; size?: number }) {
  return (
    <svg width={size} height={size} viewBox="0 0 28 28" fill="none" stroke="currentColor" strokeWidth="1.350" overflow="visible" aria-hidden="true" className="shrink-0">
      {ICONS[name]}
    </svg>
  );
}

/* ------------------------------------------------------------------ */
/* Bars around the chart                                               */
/* ------------------------------------------------------------------ */

function Divider() {
  return <span className="h-7 w-px shrink-0 bg-[#e4e4e4]" />;
}

function Tool({ name, label, className = "h-[38px] w-12", size = 28 }: { name: string; label: string; className?: string; size?: number }) {
  return (
    <button aria-label={label} className={`flex shrink-0 items-center justify-center ${className}`}>
      <Icon name={name} size={size} />
    </button>
  );
}

const INTERVALS: [string, string][] = [
  ["5분", "w-[46px]"], ["1시간", "w-[51px]"], ["4시간", "w-[61px]"], ["날", "w-[27px]"], ["주", "w-[35px]"], ["달", "w-[27px]"], ["12달", "w-[55px]"],
];

const DRAWING: [string, string][] = [
  ["trend", "추세줄"], ["segment", "선분"], ["hline", "가로줄"], ["ray", "가로빛"], ["channel", "채널"], ["fib", "되돌림"],
  ["gridTool", "격자"], ["rect", "네모"], ["zigzag", "경로"], ["forecast", "피치"], ["dateRange", "날짜 범위"], ["priceRange", "가격 범위"],
];

function TopBar() {
  return (
    <header className="relative z-10 flex h-[43px] shrink-0 items-start bg-white text-[16px] text-[#0f0f0f]">
      <div className="flex h-[38px] shrink-0 items-center">
        <button className="flex w-[118px] items-center gap-1 pl-px font-bold">
          <Icon name="search" size={25} />
          BTCKRW
        </button>
        <Tool name="plus" label="비교" className="w-10" />
        <span className="w-[10px]" />
        <Divider />
        <span className="w-[2px]" />
        {INTERVALS.map(([label, width]) => (
          <button key={label} className={`flex h-[42px] shrink-0 items-center justify-center whitespace-nowrap ${width} ${label === "1시간" ? "rounded-lg bg-[#ebebeb]" : ""}`}>
            {label}
          </button>
        ))}
        <Tool name="chevron" label="간격 더보기" className="w-[24px]" />
        <span className="w-[8px]" />
        <Divider />
        <Tool name="candles" label="차트 종류" className="w-[58px]" />
        <Divider />
        <button className="flex w-[96px] shrink-0 items-center justify-center gap-2 whitespace-nowrap">
          <Icon name="indicators" size={28} />
          지표
        </button>
        <Tool name="chevron" label="즐겨찾기" className="w-[28px]" />
        <Tool name="layout" label="템플릿" className="w-[52px]" />
        <span className="w-[2px]" />
        <Divider />
        <button className="flex w-[112px] shrink-0 items-center justify-center gap-2 whitespace-nowrap">
          <Icon name="alertPlus" />
          얼러트
        </button>
      </div>
      <div className="flex h-[43px] shrink-0 items-center rounded-b-lg bg-white pb-[5px] pl-[9px] shadow-[0_2px_5px_rgba(0,0,0,0.35)]">
        <svg width="14" height="18" viewBox="0 0 14 18" fill="#b8b8b8" aria-hidden="true">
          {[2, 9, 16].map((y) => [2, 9].map((x) => <circle key={`${x}-${y}`} cx={x} cy={y} r="1.300" />))}
        </svg>
        <div className="ml-[7px] grid w-[570px] grid-cols-12">
          {DRAWING.map(([name, label]) => (
            <Tool key={name} name={name} label={label} size={27} className="h-[38px]" />
          ))}
        </div>
      </div>
      <div className="flex h-[38px] shrink-0 items-center gap-[9px] pl-2 text-[12px]">
        <button className="size-[26px] rounded-full border border-[#e6e6e6]">단</button>
        <button className="size-[26px] rounded-full bg-[#2a2a2a] font-bold text-white">코</button>
      </div>
      <div className="ml-auto flex h-[38px] shrink-0 items-center">
        <Divider />
        <span className="w-[6px]" />
        <Tool name="flash" label="빠른 검색" size={26} />
        <Tool name="hex" label="설정" size={26} />
        <Tool name="fullscreen" label="전체화면" size={26} />
        <Tool name="camera" label="스냅샷" size={26} className="w-[46px]" />
        <span className="w-[6px]" />
        <button className="mb-[2px] h-[35px] w-[95px] rounded-full bg-[#2a2a2a] text-[17px] text-white">퍼블리쉬</button>
      </div>
    </header>
  );
}

function BottomBar() {
  const ranges = ["1D", "5D", "1M", "3M", "6M", "YTD", "1Y", "5Y", "전체"];
  return (
    <footer className="flex h-12 shrink-0 items-center justify-between pr-[13px] pl-[13px] text-[#0f0f0f]">
      <div className="flex items-center gap-[15px] text-[16px]">
        {ranges.map((r) => (
          <button key={r} className="whitespace-nowrap">{r}</button>
        ))}
        <Divider />
        <button aria-label="날짜로 가기"><Icon name="goTo" size={26} /></button>
      </div>
      <button className="text-[17px]">10:32:48 UTC+9</button>
    </footer>
  );
}

function SideBar() {
  return (
    <aside className="flex w-[51px] shrink-0 flex-col items-center rounded-tl-md bg-white pl-[2px] text-[#0f0f0f]">
      <Tool name="watchlist" label="워치리스트" className="h-[60px] w-full" />
      <Tool name="alarm" label="얼러트" className="h-[54px] w-full" size={32} />
      <Tool name="layers" label="오브젝트 트리" className="h-[60px] w-full" size={30} />
      <Tool name="chat" label="채팅" className="h-[57px] w-full" size={32} />
      <div className="mt-auto flex w-full flex-col items-center">
        <Tool name="target" label="스크리너" className="h-[55px] w-full" size={34} />
        <Tool name="ideas" label="아이디어" className="h-[55px] w-full" size={32} />
        <Tool name="calendar" label="캘린더" className="h-[55px] w-full" size={32} />
        <button aria-label="앱" className="mt-2 grid size-[42px] place-items-center rounded-full bg-[#2a2a2a]">
          <svg width="24" height="24" viewBox="0 0 24 24" fill="#fff" aria-hidden="true">
            {[0.5, 9.5, 18.5].map((y) => [0.5, 9.5, 18.5].map((x) => <rect key={`${x}-${y}`} x={x} y={y} width="5" height="5" rx="1" />))}
          </svg>
        </button>
        <span className="mt-[15px] mb-[18px] h-px w-[42px] bg-[#e4e4e4]" />
      </div>
    </aside>
  );
}

export default function App() {
  return (
    <div className="flex h-screen flex-col gap-[5px] overflow-hidden bg-[#ebebeb] font-[Roboto,'Noto_Sans_CJK_KR',sans-serif]">
      <TopBar />
      <div className="flex min-h-0 flex-1 gap-[5px]">
        <main className="flex min-w-0 flex-1 flex-col overflow-hidden rounded-tr-md bg-white">
          <PricePane />
          <OscillatorPane />
          <RsiPane />
          <MacdPane />
          <TimeAxis />
          <BottomBar />
        </main>
        <SideBar />
      </div>
    </div>
  );
}
